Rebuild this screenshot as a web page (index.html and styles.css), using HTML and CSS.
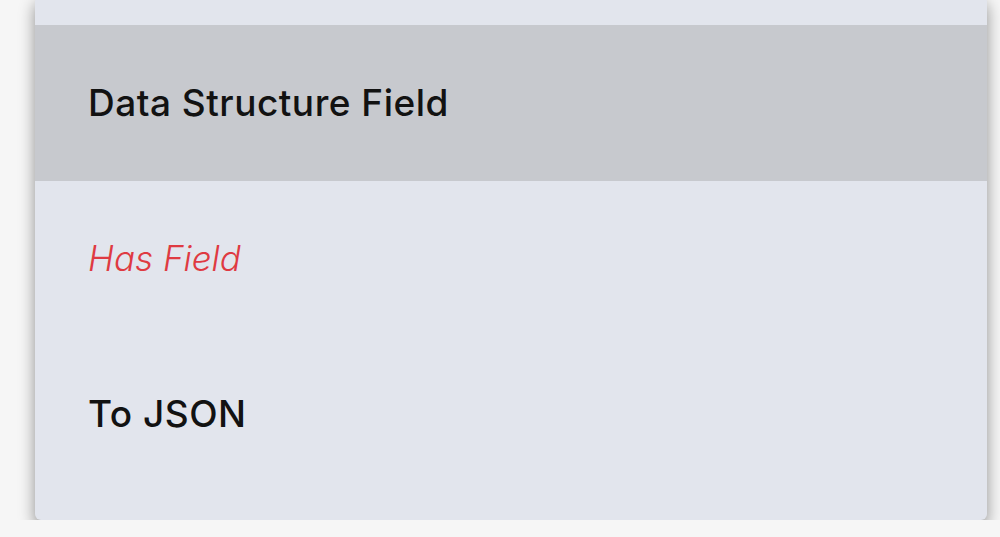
FILE: index.html
```html
<!DOCTYPE html>
<html lang="en">
<head>
    <meta charset="UTF-8">
    <meta name="viewport" content="width=device-width, initial-scale=1.0">
    <title>Field Menu</title>
    <link rel="stylesheet" href="styles.css">
</head>
<body>
    <ul class="menu">
        <li class="menu-item active">Data Structure Field</li>
        <li class="menu-item disabled">Has Field</li>
        <li class="menu-item">To JSON</li>
    </ul>
</body>
</html>
```

FILE: styles.css
```css
body { margin: 0; background: #f6f6f6; font-family: Inter, "Noto Sans", sans-serif; overflow: hidden; }
.menu { list-style: none; margin: -4px 0 0 35px; padding: 29px 0 28px; width: 952px; background: #e2e5ed; border-radius: 6px; box-shadow: 0 7px 16px rgba(0, 0, 0, 0.42); }
.menu-item { display: flex; align-items: center; height: 155.5px; padding-left: 53px; font-size: 37px; font-weight: 500; letter-spacing: 0.5px; color: #121212; }
.menu-item.active { background: #c7c9ce; }
.menu-item.disabled { color: #df3a42; font-style: italic; font-size: 35px; font-weight: 300; letter-spacing: 0; }
```
